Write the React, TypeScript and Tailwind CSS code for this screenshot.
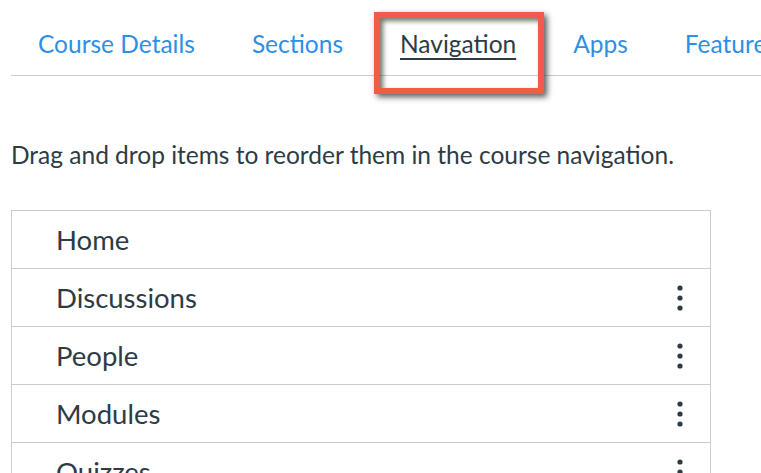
const tabs = ["Course Details", "Sections", "Navigation", "Apps", "Feature Options"];
const items = [
  { name: "Home", menu: false },
  { name: "Discussions", menu: true },
  { name: "People", menu: true },
  { name: "Modules", menu: true },
  { name: "Quizzes", menu: true },
];

const Dots = () => (
  <svg width="6" height="26" viewBox="0 0 6 26" className="text-[#2d3b45]">
    <circle cx="3" cy="3" r="2.6" fill="currentColor" />
    <circle cx="3" cy="13" r="2.6" fill="currentColor" />
    <circle cx="3" cy="23" r="2.6" fill="currentColor" />
  </svg>
);

export default function App() {
  return (
    <div
      className="relative h-[473px] w-[761px] overflow-hidden bg-white text-[#2d3b45]"
      style={{ fontFamily: "Lato, 'Noto Sans', sans-serif" }}
    >
      <div className="ml-[11px] pt-[28px]">
        <div className="flex h-[48px] items-start whitespace-nowrap border-b border-[#c7cdd1] text-[24.5px] leading-[32px]">
          {tabs.map((t, i) => (
            <span
              key={t}
              className={
                (i === 0 ? "pl-[27px] pr-[28.5px] " : "px-[28.5px] ") +
                (t === "Navigation"
                  ? "text-[#2d3b45] underline underline-offset-[5px] decoration-[1.5px]"
                  : "text-[#2d8fe6]")
              }
            >
              {t}
            </span>
          ))}
        </div>
      </div>

      <p className="ml-[11px] mt-[64px] text-[24.5px] leading-[30px]">
        Drag and drop items to reorder them in the course navigation.
      </p>

      <ul className="ml-[11px] mt-[40px] w-[700px] border-l border-r border-t border-[#c7cdd1]">
        {items.map((it) => (
          <li
            key={it.name}
            className="flex h-[58px] items-center justify-between border-b border-[#c7cdd1] pl-[44px] pr-[27px] text-[27.5px]"
          >
            <span>{it.name}</span>
            {it.menu && <Dots />}
          </li>
        ))}
      </ul>

      <div className="absolute left-[374px] top-[12px] h-[82px] w-[170px] border-[6px] border-[#f25a4a] shadow-[3px_3px_6px_rgba(0,0,0,0.65),inset_3px_3px_5px_rgba(0,0,0,0.55)]" />
    </div>
  );
}
